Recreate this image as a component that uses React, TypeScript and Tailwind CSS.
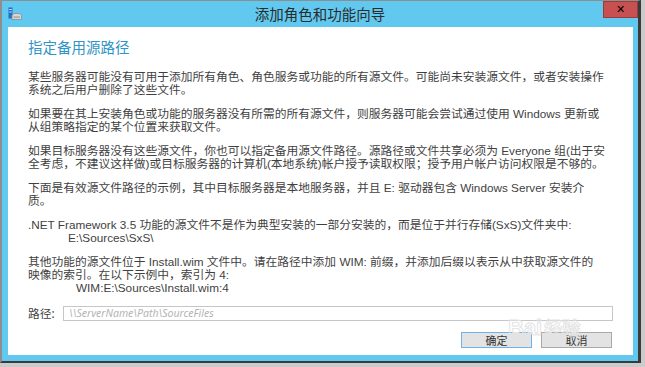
import React from "react";

const FONT = "font-['Noto_Sans','Noto_Sans_CJK_SC',sans-serif]";
const BODY_FONT = "font-['Liberation_Sans','Noto_Sans_CJK_SC',sans-serif]";

function WizardIcon() {
  return (
    <svg width="14" height="14" viewBox="0 0 14 14">
      <rect x="0.5" y="0.5" width="4" height="11" fill="#1f6fc5" />
      <rect x="1.2" y="2" width="2.6" height="1" fill="#bfe3ff" />
      <rect x="1.2" y="4.5" width="2.6" height="1" fill="#bfe3ff" />
      <path d="M4 8.5 L6 6.5 L11.5 6.5 L13.5 8.5 L13.5 12.5 L4 12.5 Z" fill="#d7d7d7" stroke="#8a8a8a" strokeWidth="0.8" />
      <rect x="5.5" y="9.5" width="6.5" height="1.2" fill="#9a9a9a" />
    </svg>
  );
}

const paragraphs: { lines: string[] }[] = [
  {
    lines: [
      "某些服务器可能没有可用于添加所有角色、角色服务或功能的所有源文件。可能尚未安装源文件，或者安装操作",
      "系统之后用户删除了这些文件。",
    ],
  },
  {
    lines: [
      "如果要在其上安装角色或功能的服务器没有所需的所有源文件，则服务器可能会尝试通过使用 Windows 更新或",
      "从组策略指定的某个位置来获取文件。",
    ],
  },
  {
    lines: [
      "如果目标服务器没有这些源文件，你也可以指定备用源文件路径。源路径或文件共享必须为 Everyone 组(出于安",
      "全考虑，不建议这样做)或目标服务器的计算机(本地系统)帐户授予读取权限；授予用户帐户访问权限是不够的。",
    ],
  },
  {
    lines: [
      "下面是有效源文件路径的示例，其中目标服务器是本地服务器，并且 E: 驱动器包含 Windows Server 安装介",
      "质。",
    ],
  },
];

export default function App() {
  return (
    <div className={`relative w-[645px] h-[367px] overflow-hidden bg-[#cbcbcb] ${FONT}`}>
      <div className="w-[641px] h-[363px] flex flex-col bg-[#61c9ef] border-l-2 border-t border-r-[3px] border-b-2 border-l-[#8e8e8e] border-t-[#8e8e8e] border-r-[#3a3a3a] border-b-[#3a3a3a]">
        {/* title bar */}
        <div className="relative h-[26px] flex items-center justify-center">
          <div className="absolute left-[6px] top-[6px]">
            <WizardIcon />
          </div>
          <span className="text-[14.5px] leading-none text-[#2b2b2b] mt-[1px]">添加角色和功能向导</span>
          <div className="absolute right-0 top-0 w-[35px] h-[17px] bg-[#c75050] border border-[#9c3b3b] flex items-center justify-center">
            <span className="text-[11px] font-bold leading-none text-black font-['DejaVu_Sans',sans-serif]">✕</span>
          </div>
        </div>

        {/* body */}
        <div className="flex-1 pl-[6px] pr-[5px] pb-[6px]">
          <div className="h-full bg-white flex flex-col pl-[20px] pr-[20px] text-[#3f3f3f]">
            <div className="pt-[11px] text-[14.5px] leading-[18px] text-[#3094c6]">指定备用源路径</div>

            <div className={`mt-[14px] flex flex-col gap-[11px] text-[11.75px] leading-[13px] whitespace-nowrap ${BODY_FONT}`}>
              {paragraphs.map((p, i) => (
                <div key={i}>
                  {p.lines.map((l, j) => (
                    <div key={j}>{l}</div>
                  ))}
                </div>
              ))}
              <div>
                <div>.NET Framework 3.5 功能的源文件不是作为典型安装的一部分安装的，而是位于并行存储(SxS)文件夹中:</div>
                <div className="pl-[40px]">E:\Sources\SxS\</div>
              </div>
              <div>
                <div>其他功能的源文件位于 Install.wim 文件中。请在路径中添加 WIM: 前缀，并添加后缀以表示从中获取源文件的</div>
                <div>映像的索引。在以下示例中，索引为 4:</div>
                <div className="pl-[48px]">WIM:E:\Sources\Install.wim:4</div>
              </div>
            </div>

            <div className="mt-[12px] flex items-center text-[11.75px]">
              <span className="w-[35px] leading-none">路径:</span>
              <div className="flex-1 h-[15px] border border-[#c6c6c6] flex items-center pl-[5px]">
                <span className="italic text-[10.5px] leading-none text-[#b4b4b4]">\\ServerName\Path\SourceFiles</span>
              </div>
            </div>

            <div className="mt-[11px] flex justify-end gap-[9px] pr-[1px]">
              <div className="w-[71px] h-[16px] bg-[#e3e3e3] border border-[#6fb2e6] flex items-center justify-center text-[11px] leading-none text-[#333]">
                确定
              </div>
              <div className="w-[71px] h-[16px] bg-[#e3e3e3] border border-[#a9a9a9] flex items-center justify-center text-[11px] leading-none text-[#333]">
                取消
              </div>
            </div>
          </div>
        </div>
      </div>

      {/* watermark */}
      <div className="absolute left-[508px] top-[317px] flex items-end gap-[2px] text-transparent [-webkit-text-stroke:1px_#e4e4e4] font-bold leading-none pointer-events-none">
        <span className="text-[22px] font-['Liberation_Sans',sans-serif]">Bai</span>
        <span className="text-[18px] mb-[2px]">经验</span>
      </div>
    </div>
  );
}
